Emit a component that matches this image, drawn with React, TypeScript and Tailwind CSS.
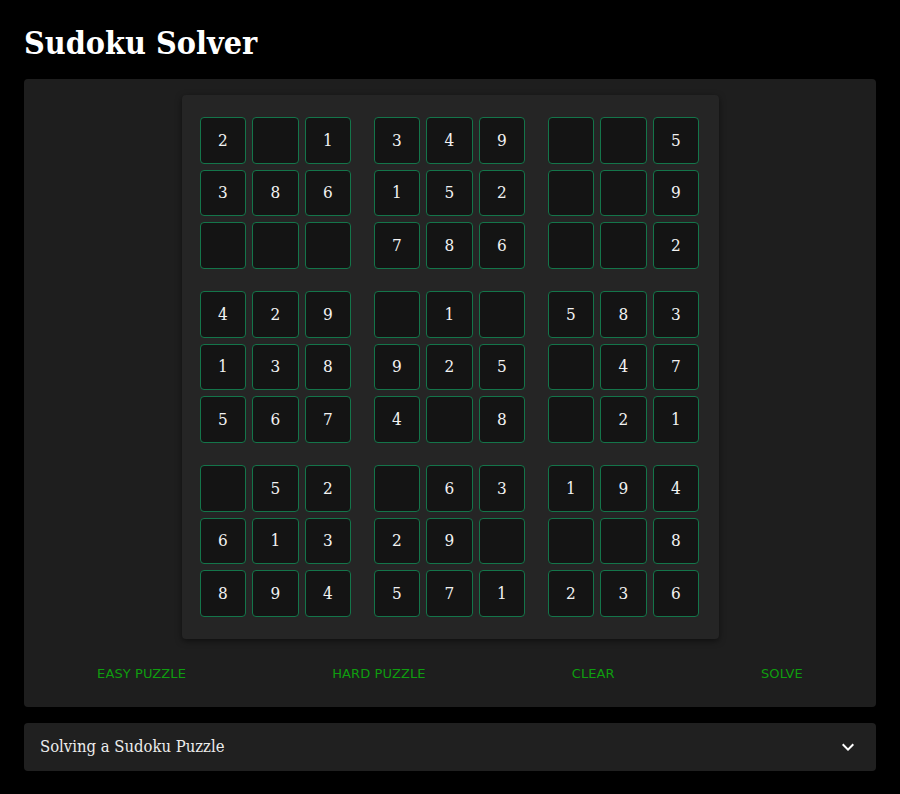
import React from "react";

const rows: (number | null)[][] = [
  [2, null, 1, 3, 4, 9, null, null, 5],
  [3, 8, 6, 1, 5, 2, null, null, 9],
  [null, null, null, 7, 8, 6, null, null, 2],
  [4, 2, 9, null, 1, null, 5, 8, 3],
  [1, 3, 8, 9, 2, 5, null, 4, 7],
  [5, 6, 7, 4, null, 8, null, 2, 1],
  [null, 5, 2, null, 6, 3, 1, 9, 4],
  [6, 1, 3, 2, 9, null, null, null, 8],
  [8, 9, 4, 5, 7, 1, 2, 3, 6],
];

const serif = { fontFamily: '"DejaVu Serif Condensed", "DejaVu Serif", "Liberation Serif", serif' };
const sans = { fontFamily: '"DejaVu Sans", Verdana, sans-serif' };

function Box({ br, bc }: { br: number; bc: number }) {
  const cells: React.ReactNode[] = [];
  for (let r = 0; r < 3; r++) {
    for (let c = 0; c < 3; c++) {
      const v = rows[br * 3 + r][bc * 3 + c];
      cells.push(
        <div
          key={`${r}-${c}`}
          className="w-[46.5px] h-[46.5px] rounded-[4px] border border-[#14754a] bg-[#141414] flex items-center justify-center text-[17px] text-[#f2f2f2]"
          style={serif}
        >
          {v ?? ""}
        </div>
      );
    }
  }
  return <div className="grid grid-cols-[repeat(3,46.5px)] gap-[6px]">{cells}</div>;
}

export default function App() {
  const boxes: React.ReactNode[] = [];
  for (let br = 0; br < 3; br++) for (let bc = 0; bc < 3; bc++) boxes.push(<Box key={`${br}${bc}`} br={br} bc={bc} />);
  return (
    <div className="min-h-[794px] bg-black px-6 pt-6 pb-6 text-white">
      <h1 className="text-[32px] leading-[39px] font-bold mb-4 text-white" style={serif}>
        Sudoku Solver
      </h1>
      <div className="bg-[#1e1e1e] rounded-[4px] pt-4 pb-4">
        <div className="mx-auto w-[537px] bg-[#252525] rounded-[4px] shadow-[0_2px_6px_rgba(0,0,0,0.5)] pl-[18px] pr-[20px] pt-[22px] pb-[22px]">
          <div className="grid grid-cols-[repeat(3,151.5px)] gap-[22.5px]">{boxes}</div>
        </div>
        <div className="mt-4 pt-[2px] flex justify-around items-center h-[36.5px]" style={sans}>
          {["EASY PUZZLE", "HARD PUZZLE", "CLEAR", "SOLVE"].map((t) => (
            <button key={t} className="px-3 py-[6px] text-[13px] font-medium tracking-[0.1px] text-[#0f9d0f] uppercase">
              {t}
            </button>
          ))}
        </div>
      </div>
      <div className="mt-4 bg-[#202020] rounded-[4px] h-12 px-4 flex items-center justify-between">
        <span className="text-[16.5px] pt-[1px] text-[#ececec]" style={serif}>
          Solving a Sudoku Puzzle
        </span>
        <svg width="24" height="24" viewBox="0 0 24 24">
          <path d="M7.41 8.59 12 13.17l4.59-4.58L18 10l-6 6-6-6 1.41-1.41z" fill="#ffffff" />
        </svg>
      </div>
    </div>
  );
}
